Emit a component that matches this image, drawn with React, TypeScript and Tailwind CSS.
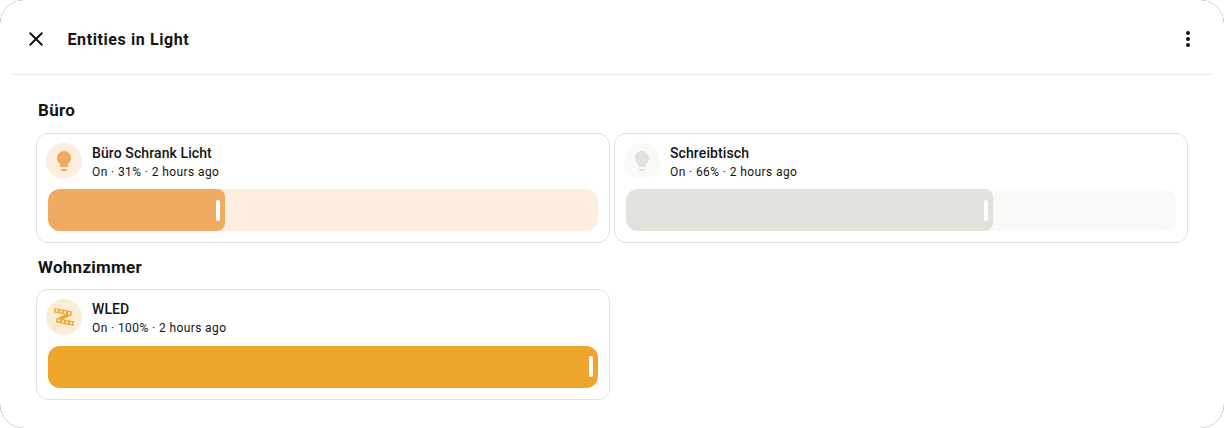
import type { ReactNode } from 'react';

const CLOSE = 'M19,6.41L17.59,5L12,10.59L6.41,5L5,6.41L10.59,12L5,17.59L6.41,19L12,13.41L17.59,19L19,17.59L13.41,12L19,6.41Z';
const DOTS = 'M12,16A2,2 0 0,1 14,18A2,2 0 0,1 12,20A2,2 0 0,1 10,18A2,2 0 0,1 12,16M12,10A2,2 0 0,1 14,12A2,2 0 0,1 12,14A2,2 0 0,1 10,12A2,2 0 0,1 12,10M12,4A2,2 0 0,1 14,6A2,2 0 0,1 12,8A2,2 0 0,1 10,6A2,2 0 0,1 12,4Z';
const BULB = 'M12,2A7,7 0 0,0 5,9C5,11.38 6.19,13.47 8,14.74V17A1,1 0 0,0 9,18H15A1,1 0 0,0 16,17V14.74C17.81,13.47 19,11.38 19,9A7,7 0 0,0 12,2M9,21A1,1 0 0,0 10,22H14A1,1 0 0,0 15,21V20H9V21Z';
const STRIP = 'M0,0H17.8V4.5H0ZM1.4,1.2V3.3H3.7V1.2ZM5.6,1.2V3.3H7.9V1.2ZM9.8,1.2V3.3H12.1V1.2ZM14,1.2V3.3H16.3V1.2Z';

function Icon({ d }: { d: string }) {
  return (
    <svg viewBox="0 0 24 24" className="size-6 fill-current">
      <path d={d} />
    </svg>
  );
}

function LedStripIcon() {
  return (
    <svg viewBox="0 0 24 24" className="size-6 fill-current">
      <path fillRule="evenodd" transform="translate(2.7 2.9) rotate(12)" d={STRIP} />
      <path fillRule="evenodd" transform="translate(4.8 12.8) rotate(12)" d={STRIP} />
      <path d="M13.2,9.5L18.6,10.7L10.8,14.2L5.4,13Z" />
    </svg>
  );
}

type Light = {
  name: string;
  state: string;
  value: number;
  icon: ReactNode;
  iconClass: string;
  trackClass: string;
  fillClass: string;
};

function LightCard({ light }: { light: Light }) {
  return (
    <article className="h-[110.5px] rounded-xl border border-[#e0e0e0] bg-white">
      <div className="flex h-[55.3px] items-start gap-2.5 pt-[9px] pl-[9px]">
        <div className={`flex size-9 items-center justify-center rounded-full ${light.iconClass}`}>{light.icon}</div>
        <div>
          <div className="text-[14px] leading-5 font-medium tracking-[0.1px]">{light.name}</div>
          <div className="text-[12px] leading-[18px] tracking-[0.4px]">{light.state}</div>
        </div>
      </div>
      <div className={`mx-[11px] h-[42px] overflow-hidden rounded-xl ${light.trackClass}`}>
        <div
          className={`flex h-full items-center justify-end rounded-r-lg pr-[5px] ${light.fillClass}`}
          style={{ width: `${light.value}%` }}
        >
          <div className="h-[21px] w-1 rounded-sm bg-white" />
        </div>
      </div>
    </article>
  );
}

const office: Light[] = [
  {
    name: 'Büro Schrank Licht',
    state: 'On · 31% · 2 hours ago',
    value: 32.1,
    icon: <Icon d={BULB} />,
    iconClass: 'bg-[#fceede] text-[#f0ab61]',
    trackClass: 'bg-[#fceddf]',
    fillClass: 'bg-[#f0ab61]',
  },
  {
    name: 'Schreibtisch',
    state: 'On · 66% · 2 hours ago',
    value: 66.65,
    icon: <Icon d={BULB} />,
    iconClass: 'bg-[#f9f9f8] text-[#e1e2dc]',
    trackClass: 'bg-[#f9f9f8]',
    fillClass: 'bg-[#e1e2dc]',
  },
];

const living: Light[] = [
  {
    name: 'WLED',
    state: 'On · 100% · 2 hours ago',
    value: 100,
    icon: <LedStripIcon />,
    iconClass: 'bg-[#fbedd5] text-[#eea52b]',
    trackClass: 'bg-[#fbedd5]',
    fillClass: 'bg-[#eea52b]',
  },
];

function Section({ title, lights }: { title: string; lights: Light[] }) {
  return (
    <section>
      <h2 className="flex h-[45.9px] items-center pt-px pl-0.5 text-[17px] leading-6 font-bold tracking-[0.28px]">{title}</h2>
      <div className="grid grid-cols-2 gap-1">
        {lights.map((light) => (
          <LightCard key={light.name} light={light} />
        ))}
      </div>
    </section>
  );
}

export default function App() {
  return (
    <div className="h-[428px] w-[1224px] bg-white font-['Roboto',sans-serif] text-[#141414]">
      <div className="h-full rounded-[24px] bg-[#333333]">
        <main className="h-full rounded-[24px] bg-white px-3">
          <header className="flex h-[75px] items-center border-b border-[#ebebeb] pt-1 pr-3 pl-3">
            <button aria-label="Close" className="flex">
              <Icon d={CLOSE} />
            </button>
            <h1 className="ml-[19.5px] flex-1 pt-0.5 text-[16px] leading-6 font-bold tracking-[0.6px]">Entities in Light</h1>
            <button aria-label="More options" className="flex">
              <Icon d={DOTS} />
            </button>
          </header>
          <div className="px-6 pt-3">
            <Section title="Büro" lights={office} />
            <Section title="Wohnzimmer" lights={living} />
          </div>
        </main>
      </div>
    </div>
  );
}
